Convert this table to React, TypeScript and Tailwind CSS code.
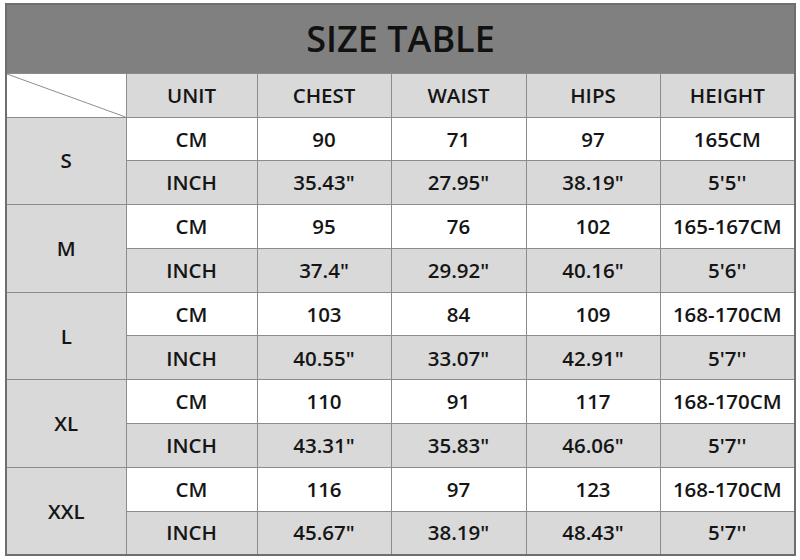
import React from "react";

const rows = [
  { size: "S", cm: ["90", "71", "97", "165CM"], inch: ["35.43\"", "27.95\"", "38.19\"", "5'5''"] },
  { size: "M", cm: ["95", "76", "102", "165-167CM"], inch: ["37.4\"", "29.92\"", "40.16\"", "5'6''"] },
  { size: "L", cm: ["103", "84", "109", "168-170CM"], inch: ["40.55\"", "33.07\"", "42.91\"", "5'7''"] },
  { size: "XL", cm: ["110", "91", "117", "168-170CM"], inch: ["43.31\"", "35.83\"", "46.06\"", "5'7''"] },
  { size: "XXL", cm: ["116", "97", "123", "168-170CM"], inch: ["45.67\"", "38.19\"", "48.43\"", "5'7''"] },
];

const cell = "border border-[#8c8c8c] text-center align-middle p-0";

export default function App() {
  return (
    <div className="w-[800px] h-[560px] bg-white pt-[3px] pl-[5px]" style={{ fontFamily: '"Open Sans", "Noto Sans", sans-serif' }}>
      <table className="border-collapse border-2 border-[#6e6e6e] text-[20.5px] font-semibold text-[#151515] table-fixed w-[789px]">
        <colgroup>
          <col className="w-[120px]" />
          <col className="w-[131px]" />
          <col className="w-[134px]" />
          <col className="w-[135px]" />
          <col className="w-[134px]" />
          <col className="w-[135px]" />
        </colgroup>
        <tbody>
          <tr className="h-[69px]">
            <td colSpan={6} className={`${cell} bg-[#808080] text-[36px] font-semibold text-[#111]`}>
              SIZE TABLE
            </td>
          </tr>
          <tr className="h-[44px]">
            <td className={`${cell} bg-white relative`}>
              <svg className="absolute inset-0 w-full h-full" viewBox="0 0 120 44" preserveAspectRatio="none">
                <line x1="0" y1="0" x2="120" y2="44" stroke="#8c8c8c" strokeWidth="1" />
              </svg>
            </td>
            {["UNIT", "CHEST", "WAIST", "HIPS", "HEIGHT"].map((h) => (
              <td key={h} className={`${cell} bg-[#d9d9d9]`}>
                {h}
              </td>
            ))}
          </tr>
          {rows.map((r) => (
            <React.Fragment key={r.size}>
              <tr className="h-[43.8px]">
                <td rowSpan={2} className={`${cell} bg-[#d9d9d9]`}>{r.size}</td>
                <td className={`${cell} bg-white`}>CM</td>
                {r.cm.map((v, i) => (
                  <td key={i} className={`${cell} bg-white`}>{v}</td>
                ))}
              </tr>
              <tr className="h-[43.8px]">
                <td className={`${cell} bg-[#d9d9d9]`}>INCH</td>
                {r.inch.map((v, i) => (
                  <td key={i} className={`${cell} bg-[#d9d9d9]`}>{v}</td>
                ))}
              </tr>
            </React.Fragment>
          ))}
        </tbody>
      </table>
    </div>
  );
}
